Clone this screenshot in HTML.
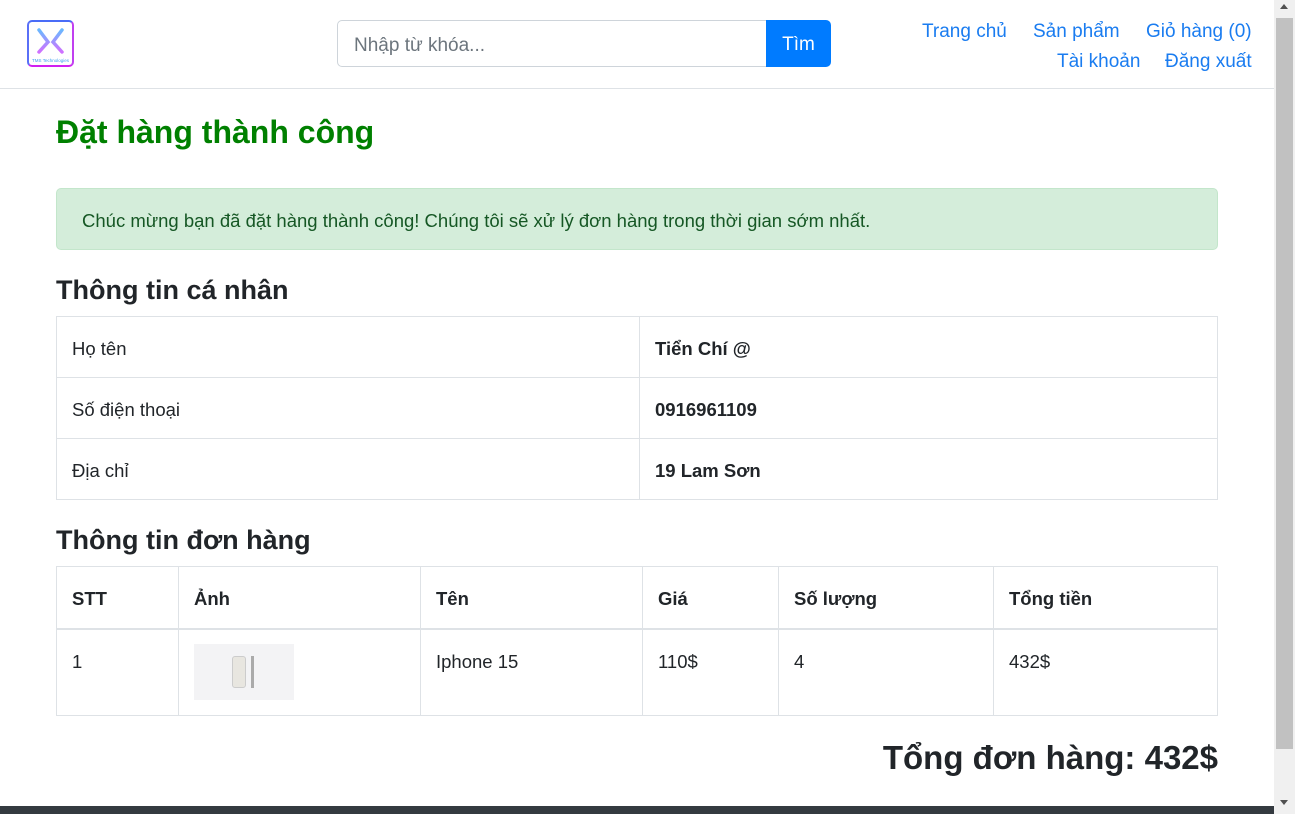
<!DOCTYPE html>
<html><head><meta charset="utf-8"><style>
*{box-sizing:border-box;margin:0;padding:0}
body{width:1295px;height:814px;overflow:hidden;font-family:"Liberation Sans",sans-serif;color:#212529;background:#fff;position:relative;font-size:18px}
.nav{position:absolute;left:0;top:0;width:1274px;height:89px;border-bottom:1px solid #dee2e6}
.logo{position:absolute;left:27px;top:20px;width:47px;height:47px;border:2px solid;border-radius:5px;border-color:#4a6cf7 #c040f0 #d020f0 #5a70f7;background:#fff}
.search{position:absolute;left:337px;top:20px;width:430px;height:47px;border:1px solid #ced4da;border-radius:5px 0 0 5px;padding:14px 16px 0;color:#6c757d;font-size:19px}
.btn{position:absolute;left:766px;top:20px;width:65px;height:47px;background:#007bff;color:#fff;border-radius:0 5px 5px 0;font-size:19px;text-align:center;line-height:50px}
.links a{position:absolute;color:#1a7cf0;text-decoration:none;font-size:19px}
.abs{position:absolute}
h1{position:absolute;left:56px;top:114px;color:#008000;font-size:32px;font-weight:bold}
.alert{position:absolute;left:56px;top:188px;width:1162px;height:62px;background:#d4edda;border:1px solid #c3e6cb;border-radius:5px;color:#155724;padding:21px 25px 0;font-size:18.5px}
h2{position:absolute;left:56px;font-size:27px;font-weight:bold}
table{position:absolute;left:56px;width:1162px;border-collapse:collapse}
td,th{border:1px solid #dee2e6;padding:3px 15px 0;text-align:left;font-size:18.5px}
th{font-weight:bold}
.scroll{position:absolute;left:1274px;top:0;width:21px;height:814px;background:#f0f0f0}
</style></head><body>
<div class="nav">
<div class="logo"><svg width="43" height="43" viewBox="0 0 43 43"><defs><linearGradient id="g" x1="0" y1="0" x2="0" y2="1"><stop offset="0" stop-color="#6ab8ff"/><stop offset="1" stop-color="#d070ff"/></linearGradient></defs><path d="M10 8 L19 20 L10 30 M33 8 L24 20 L33 30" stroke="url(#g)" stroke-width="3.5" fill="none" stroke-linecap="round"/><text x="21.5" y="40" font-size="4.5" text-anchor="middle" fill="#3aa0f0" font-family="Liberation Sans">TMS Technologies</text></svg></div>
<div class="search">Nhập từ khóa...</div>
<div class="btn">Tìm</div>
<div class="links"><a style="left:922px;top:21px">Trang chủ</a><a style="left:1033px;top:21px">Sản phẩm</a><a style="left:1146px;top:21px">Giỏ hàng (0)</a><a style="left:1057px;top:51px">Tài khoản</a><a style="left:1165px;top:51px">Đăng xuất</a></div>
</div>
<h1>Đặt hàng thành công</h1>
<div class="alert">Chúc mừng bạn đã đặt hàng thành công! Chúng tôi sẽ xử lý đơn hàng trong thời gian sớm nhất.</div>
<h2 style="top:275px">Thông tin cá nhân</h2>
<table style="top:316px">
<tr style="height:61px"><td style="width:583px">Họ tên</td><td><b>Tiển Chí @</b></td></tr>
<tr style="height:61px"><td>Số điện thoại</td><td><b>0916961109</b></td></tr>
<tr style="height:61px"><td>Địa chỉ</td><td><b>19 Lam Sơn</b></td></tr>
</table>
<h2 style="top:525px">Thông tin đơn hàng</h2>
<table style="top:566px">
<tr style="height:62px;border-bottom:2px solid #dee2e6"><th style="width:122px">STT</th><th style="width:242px">Ảnh</th><th style="width:222px">Tên</th><th style="width:136px">Giá</th><th style="width:215px">Số lượng</th><th>Tổng tiền</th></tr>
<tr style="height:87px;vertical-align:top"><td style="padding-top:21px">1</td><td style="padding-top:14px"><div style="width:100px;height:56px;background:#f3f3f5;position:relative"><div style="position:absolute;left:38px;top:12px;width:14px;height:32px;background:#e8e6e0;border:1px solid #ccc;border-radius:3px"></div><div style="position:absolute;left:57px;top:12px;width:3px;height:32px;background:#aaa"></div></div></td><td style="padding-top:21px">Iphone 15</td><td style="padding-top:21px">110$</td><td style="padding-top:21px">4</td><td style="padding-top:21px">432$</td></tr>
</table>
<div class="abs" style="right:77px;top:739px;font-size:33px;font-weight:bold">Tổng đơn hàng: 432$</div>
<div class="abs" style="left:0;top:806px;width:1274px;height:8px;background:#343a40"></div>
<div class="scroll"><div style="position:absolute;left:2px;top:18px;width:17px;height:731px;background:#c1c1c1"></div><div style="position:absolute;left:6px;top:4px;border:4px solid transparent;border-bottom:5px solid #505050;border-top:0"></div><div style="position:absolute;left:6px;top:800px;border:4px solid transparent;border-top:5px solid #505050;border-bottom:0"></div></div>
</body></html>
